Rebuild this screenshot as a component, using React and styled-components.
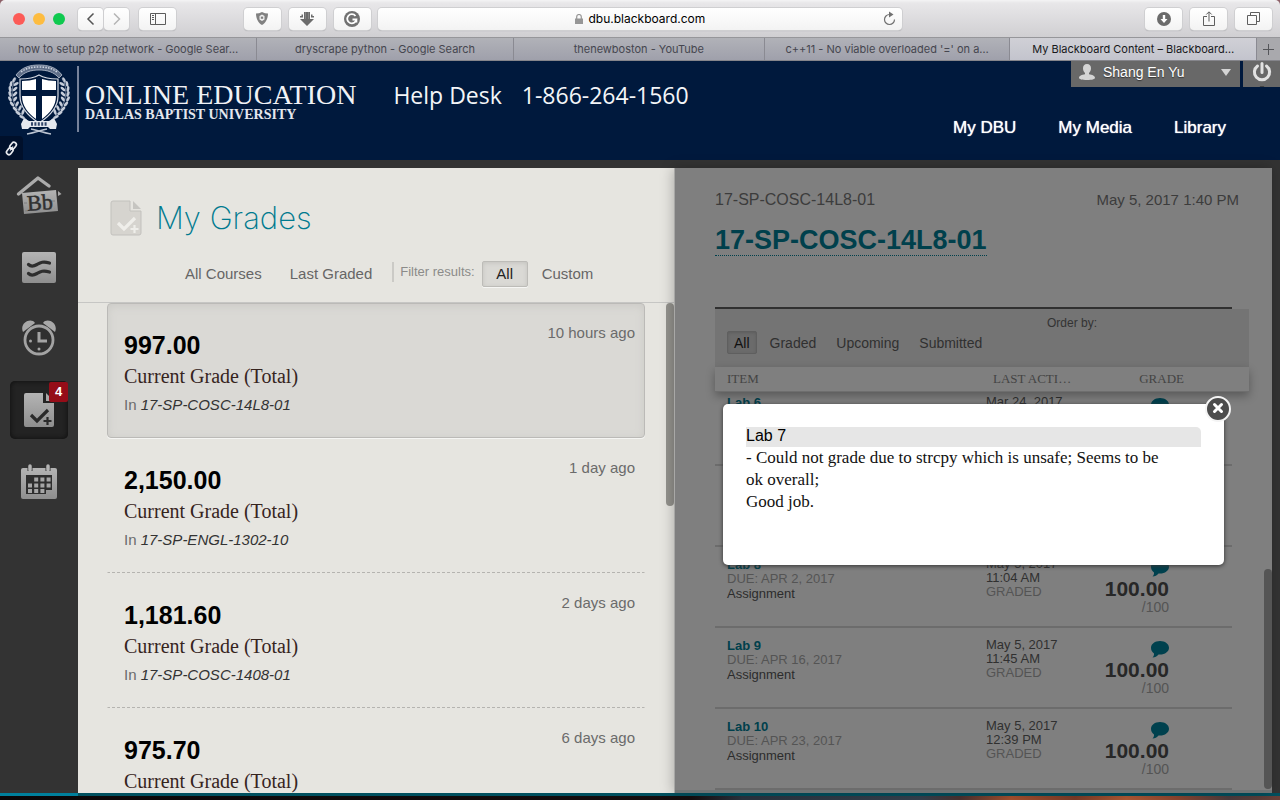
import React from "react";
import styled, { createGlobalStyle, css } from "styled-components";

const sans = '"Liberation Sans", Arial, sans-serif';
const serif = '"Liberation Serif", Georgia, serif';
const system = 'Inter, "Liberation Sans", sans-serif';

const GlobalStyle = createGlobalStyle`
  * { box-sizing: border-box; }
  body { margin: 0; background: #8d6068; font-family: ${sans}; overflow: hidden; }
  button { font: inherit; color: inherit; border: 0; padding: 0; background: none; cursor: pointer; }
  a { color: inherit; text-decoration: none; }
  h1, h2, h3, p, ul { margin: 0; padding: 0; font-weight: normal; }
  ul { list-style: none; }
  svg { display: block; flex: none; }
`;

const Window = styled.div`
  display: flex;
  flex-direction: column;
  height: 100vh;
  border-radius: 5px 5px 0 0;
  overflow: hidden;
`;

/* ---------- browser chrome ---------- */

const Toolbar = styled.div`
  display: grid;
  grid-template-columns: 1fr 41% 1fr;
  align-items: center;
  flex: none;
  height: 38px;
  background: linear-gradient(#f4f4f5, #e8e7e9 3px, #d0cfd2);
  border-bottom: 1px solid #96969a;
`;

const Cluster = styled.div`
  display: flex;
  align-items: center;
  gap: ${(p) => p.$gap || 8}px;
`;

const LeftTools = styled.div`
  display: flex;
  justify-content: space-between;
  padding: 0 7px 0 13px;
`;

const RightTools = styled(Cluster)`
  justify-content: flex-end;
  padding-right: 8px;
`;

const Light = styled.span`
  width: 12px;
  height: 12px;
  border-radius: 50%;
  background: ${(p) => p.$color};
`;

const ToolButton = styled.button`
  display: flex;
  align-items: center;
  justify-content: center;
  width: ${(p) => (p.$narrow ? 25 : 37)}px;
  height: 22px;
  border-radius: 4px;
  background: linear-gradient(#fff, #f3f3f3);
  box-shadow: 0 0 0 1px #cfcfd1, 0 1px 1px #9c9c9f;
`;

const Address = styled.label`
  display: flex;
  align-items: center;
  justify-content: center;
  gap: 5px;
  position: relative;
  height: 22px;
  padding-left: 6px;
  border-radius: 4px;
  background: linear-gradient(#fff, #f3f3f3);
  box-shadow: 0 0 0 1px #cfcfd1, 0 1px 1px #9c9c9f;
`;

const AddressInput = styled.input`
  width: 122px;
  padding: 0;
  border: 0;
  outline: 0;
  background: none;
  color: #000;
  font: 12px/20px ${system};
`;

const Reload = styled.button`
  position: absolute;
  right: 6px;
  top: 3px;
`;

const TabBar = styled.div`
  display: flex;
  flex: none;
  height: 23px;
  border-bottom: 1px solid #85858b;
  background: linear-gradient(#b1b2b8, #9fa0ab);
`;

const Tab = styled.button`
  flex: ${(p) => p.$grow} 1 0;
  min-width: 0;
  padding: 0 12px;
  overflow: hidden;
  white-space: nowrap;
  text-overflow: ellipsis;
  border-right: 1px solid #8a8a92;
  color: ${(p) => (p.$active ? "#17171a" : "#45464f")};
  background: ${(p) => (p.$active ? "linear-gradient(#d0d0d6, #c3c4cd)" : "none")};
  font: 11px/22px ${system};
`;

const NewTab = styled.button`
  display: flex;
  align-items: center;
  justify-content: center;
  width: 23px;
  background: #a9a9ad;
`;

/* ---------- university banner ---------- */

const Banner = styled.header`
  display: flex;
  justify-content: space-between;
  flex: none;
  position: relative;
  height: 99px;
  background: #00193d;
  color: #fff;
`;

const Brand = styled.div`
  display: flex;
  align-items: flex-start;
  padding-left: 7px;
`;

const BrandText = styled.div`
  margin: 5px 0 0 6px;
  padding: 13px 0 0 6px;
  height: 66px;
  border-left: 2px solid #76829a;
  font-family: ${serif};
  white-space: nowrap;
`;

const BrandName = styled.div`
  font-size: 28px;
  line-height: 32px;
  color: #f0f2f6;
`;

const BrandSub = styled.div`
  margin-top: -3px;
  font-size: 14px;
  font-weight: bold;
  line-height: 14px;
  color: #e4e7ee;
`;

const HelpLine = styled.div`
  display: flex;
  gap: 20px;
  margin: 18px 0 0 37px;
  font: 23px/32px "Open Sans", sans-serif;
  white-space: nowrap;
  color: #f3f5f8;
`;

const LinkBadge = styled.a`
  position: absolute;
  left: 0;
  bottom: 0;
  display: flex;
  align-items: center;
  justify-content: center;
  width: 23px;
  height: 24px;
  border-radius: 0 4px 0 0;
  background: #00102b;
`;

const BannerRight = styled.div`
  display: flex;
  flex-direction: column;
  align-items: flex-end;
`;

const UserBar = styled.div`
  display: flex;
  gap: 3px;
`;

const UserButton = styled.button`
  display: flex;
  align-items: center;
  width: 169px;
  height: 26px;
  padding: 0 9px 4px 8px;
  background: #686868;
  color: #fff;
  font-size: 14px;
  text-align: left;
  text-shadow: 0 1px 1px #333;
`;

const UserName = styled.span`
  flex: 1;
  padding-left: 8px;
`;

const PowerButton = styled.button`
  display: flex;
  justify-content: center;
  width: 37px;
  height: 26px;
  background: #686868;
`;

const MainNav = styled.nav`
  display: flex;
  gap: 42px;
  margin-top: 31px;
  padding-right: 54px;
  font-size: 17px;
  line-height: 20px;
  text-shadow: 0 0 1px #fff;
`;

/* ---------- page frame ---------- */

const Page = styled.main`
  display: flex;
  flex: 1;
  min-height: 0;
  background: #333;
`;

const Sidebar = styled.nav`
  display: flex;
  flex-direction: column;
  align-items: center;
  gap: 14px;
  flex: none;
  width: 78px;
  padding-top: 5px;
`;

const SideButton = styled.button`
  display: flex;
  align-items: center;
  justify-content: center;
  position: relative;
  flex: none;
  width: 58px;
  height: 58px;
  border-radius: 5px;
  ${(p) =>
    p.$active &&
    css`
      background: #232323;
      box-shadow: inset 0 0 5px #0c0c0c;
    `}
`;

const Badge = styled.span`
  position: absolute;
  top: 1px;
  right: 0;
  width: 19px;
  height: 20px;
  border-radius: 2px;
  background: #950d18;
  color: #fff;
  font: bold 13px/19px ${sans};
  text-align: center;
`;

const Panels = styled.div`
  display: grid;
  grid-template-columns: 1fr 1fr;
  flex: 1;
  min-width: 0;
  padding: 8px 8px 0 0;
`;

const GradesPanel = styled.section`
  display: flex;
  flex-direction: column;
  position: relative;
  min-height: 0;
  overflow: hidden;
  background: #e6e5e0;
`;

const GradesHeader = styled.div`
  flex: none;
  padding: 30px 0 14px;
  border-bottom: 1px solid #c6c6c4;
`;

const TitleRow = styled.div`
  display: flex;
  align-items: center;
  gap: 14px;
  padding-left: 32px;
`;

const Title = styled.h1`
  font: 200 31px/40px Inter, "Open Sans", sans-serif;
  color: #007a8f;
`;

const GradeFilters = styled.div`
  display: flex;
  align-items: center;
  height: 28px;
  margin-top: 22px;
  padding-left: 107px;
  color: #666;
  font-size: 15px;
`;

const FilterButton = styled.button`
  height: 26px;
  margin-right: ${(p) => p.$after || 0}px;
  padding-bottom: 2px;
  white-space: nowrap;
`;

const PressedFilter = styled(FilterButton)`
  width: 46px;
  border: 1px solid #bdbcb8;
  border-radius: 2px;
  background: #dad9d5;
  color: #222;
  box-shadow: inset 0 1px 4px #c4c3bf, 0 1px 0 #f6f6f4;
`;

const FilterLabel = styled.span`
  align-self: flex-start;
  height: 20px;
  margin: 2px 7px 0 0;
  padding-left: 6px;
  border-left: 2px solid #cbcac6;
  color: #8b8b89;
  font-size: 13px;
  line-height: 20px;
  white-space: nowrap;
`;

const GradeList = styled.ul`
  flex: 1;
  min-height: 0;
  overflow: hidden;
  padding: 0 30px 0 29px;
`;

const GradeItem = styled.li`
  display: flex;
  justify-content: space-between;
  padding: 27px 9px 22px 16px;
  border: 1px solid transparent;
  ${(p) =>
    p.$selected
      ? css`
          border-color: #bbbab7;
          border-radius: 4px;
          background: #dad9d5;
          box-shadow: inset 0 2px 8px #cbcac6, 0 1px 0 #f5f5f3;
        `
      : css`
          border-bottom: 1px dashed #b5b4b0;
        `}
`;

const Score = styled.div`
  font-size: 25px;
  font-weight: bold;
  line-height: 28px;
  color: #000;
`;

const ScoreLabel = styled.div`
  margin: 4px 0 6px;
  font: 20px/26px ${serif};
  color: #36241e;
`;

const ScoreCourse = styled.div`
  font-size: 15px;
  line-height: 20px;
  color: #6b6b6b;

  em { color: #333; }
`;

const Ago = styled.div`
  margin-top: -8px;
  font-size: 15px;
  line-height: 20px;
  color: #6b6b6b;
`;

const ListThumb = styled.div`
  position: absolute;
  top: 135px;
  right: 1px;
  width: 8px;
  height: 203px;
  border-radius: 4px;
  background: #93928d;
`;

/* ---------- dimmed detail panel ---------- */

const DetailPanel = styled.section`
  position: relative;
  z-index: 1;
  min-height: 0;
  padding: 22px 23px 0 40px;
  background: #7f7f7f;
  box-shadow: -1px 0 0 #a8a8a6, -2px 0 12px rgba(0, 0, 0, 0.25);
`;

const DetailScroll = styled.div`
  height: 100%;
  overflow: hidden;
  margin: 0 -23px 0 -20px;
  padding: 0 23px 0 20px;
`;

const CourseLine = styled.div`
  display: flex;
  justify-content: space-between;
  padding-right: 10px;
  color: #3c3c3c;
  line-height: 20px;
`;

const CourseCode = styled.span`
  font-size: 16px;
`;

const CourseDate = styled.time`
  font-size: 15px;
`;

const CourseLink = styled.a`
  display: inline-block;
  margin-top: 15px;
  border-bottom: 1px dotted #00404c;
  color: #00404c;
  font-size: 27px;
  font-weight: bold;
  line-height: 30px;
`;

const Rule = styled.div`
  height: 2px;
  margin: 51px 17px 0 0;
  background: #303030;
`;

const OrderBand = styled.div`
  display: grid;
  grid-template-columns: 1fr 202px;
  height: 58px;
  padding-left: 12px;
  background: #747474;
  color: #333;
`;

const OrderTabs = styled.div`
  display: flex;
  gap: 6px;
  padding-top: 22px;
`;

const OrderTab = styled.button`
  height: 23px;
  padding: 0 6px;
  border: 1px solid ${(p) => (p.$active ? "#5f5f5f" : "transparent")};
  border-radius: 2px;
  background: ${(p) => (p.$active ? "#6b6b6b" : "none")};
  box-shadow: ${(p) => (p.$active ? "inset 0 1px 3px #5e5e5e" : "none")};
  color: ${(p) => (p.$active ? "#111" : "#303030")};
  font-size: 14px;
`;

const OrderBy = styled.span`
  padding-top: 6px;
  font-size: 12px;
  line-height: 16px;
`;

const Labs = styled.table`
  width: 100%;
  table-layout: fixed;
  border-collapse: separate;
  border-spacing: 0;
  font-size: 13px;
`;

const LabsHead = styled.thead`
  position: relative;
  background: #7f7f7f;
  box-shadow: 0 4px 10px rgba(0, 0, 0, 0.3);
`;

const HeadCell = styled.th`
  width: ${(p) => p.$width || "auto"};
  height: 25px;
  padding: ${(p) => p.$pad || "0"};
  font: 13px/24px ${serif};
  text-align: ${(p) => p.$align || "left"};
  color: #444;
  border-bottom: 1px solid #6e6e6e;
`;

const LabCell = styled.td`
  height: ${(p) => (p.$clipped ? 74 : 81)}px;
  padding: ${(p) => (p.$clipped ? 3 : 10)}px ${(p) => (p.$right ? 63 : 0)}px 0 ${(p) => (p.$right ? 0 : 12)}px;
  border-bottom: 2px solid #6c6c6c;
  vertical-align: top;
  text-align: ${(p) => (p.$right ? "right" : "left")};
  line-height: 14px;
`;

const LabLink = styled.a`
  display: block;
  color: #00404c;
  font-weight: bold;
  line-height: 15px;
`;

const Muted = styled.div`
  color: #545454;
`;

const Kind = styled.div`
  color: #2c2c2c;
  line-height: 16px;
`;

const LabDate = styled.div`
  color: #303030;
  line-height: 14px;
`;

const Points = styled.div`
  margin-top: 1px;
  color: #272727;
  font-size: 21px;
  font-weight: bold;
  line-height: 22px;
`;

const OutOf = styled(Muted)`
  font-size: 14px;
  line-height: 15px;
`;

const CommentButton = styled.button`
  display: block;
  margin-left: auto;
  padding-top: 3px;
`;

const DetailThumb = styled.div`
  position: absolute;
  right: 0;
  bottom: 4px;
  width: 8px;
  height: 220px;
  border-radius: 4px;
  background: #555;
`;

const PanelFoot = styled.div`
  position: absolute;
  left: 0;
  right: 0;
  bottom: 0;
  height: 3px;
  background: #707475;
`;

const Dialog = styled.div`
  position: absolute;
  top: 236px;
  left: 48px;
  right: 48px;
  min-height: 161px;
  padding: 23px;
  border-radius: 5px;
  background: #fff;
  color: #111;
  box-shadow: 0 1px 4px #333;
`;

const DialogTitle = styled.h2`
  border-radius: 0 5px 0 0;
  background: #e6e6e6;
  font-size: 16px;
  line-height: 18px;
  padding-bottom: 2px;
  color: #000;
`;

const DialogText = styled.p`
  padding-right: 24px;
  font: 17px/22px ${serif};
`;

const DialogClose = styled.button`
  position: absolute;
  top: -9px;
  right: -8px;
`;

const TealEdge = styled.div`
  flex: none;
  height: 3px;
  background: linear-gradient(90deg, #007f9c 78px, #00505f 78px);
`;

const Desktop = styled.div`
  flex: none;
  height: 4px;
  background: linear-gradient(90deg, #0b0708 0%, #150d0e 54%, #2a3440 58%, #35414e 72%, #4a3230 75%, #a5512f 79%, #7a3c28 84%, #b05a34 88%, #8c4630 92%, #4b3c3e 96%, #6a4038 100%);
`;

/* ---------- drawings ---------- */

const Sprig = ({ flip }) => (
  <g transform={flip ? "translate(64 0) scale(-1 1)" : undefined} fill="#c5ccd8">
    {[
      [7, 19, -60], [4, 23, -80], [3, 28, 80], [3, 33, 70], [3, 38, 60],
      [5, 43, 50], [8, 48, 45], [11, 52, 35], [15, 56, 25],
      [9, 23, -30], [8, 28, -40], [8, 33, -45], [8, 38, -50], [10, 43, -60], [13, 47, -65], [16, 51, -70],
    ].map(([x, y, r]) => (
      <ellipse key={`${x}-${y}`} cx={x} cy={y} rx="3" ry="1.4" transform={`rotate(${r} ${x} ${y})`} />
    ))}
    <path d="M9 17C2 28 4 46 20 59" fill="none" stroke="#8d99ad" strokeWidth=".8" />
  </g>
);

const Crest = () => (
  <svg width="64" height="74" viewBox="0 0 64 74">
    <path d="M9 14C15 6 23 4 32 4s17 2 23 10l-3 3c-5-6-12-8-20-8s-15 2-20 8z" fill="#5f6e88" stroke="#b7c0ce" strokeWidth=".8" />
    <path d="M14 11c5-4 11-5 18-5s13 1 18 5" fill="none" stroke="#cdd4df" strokeWidth="1.6" strokeDasharray="1.6 1.2" />
    <Sprig />
    <Sprig flip />
    <path d="M13 18c7 0 14-1 19-4 5 3 12 4 19 4v17c0 12-8 20-19 27C21 55 13 47 13 35z" fill="#00193d" stroke="#d5dae3" strokeWidth="1.2" />
    <path d="M15 20c5 0 10-1 14-2v11H15zM35 18c4 1 9 2 14 2v9H35zM15 35h14v23c-8-6-14-13-14-23zM35 35h14c0 10-6 17-14 23z" fill="#fff" />
    <path d="M14 63l3-6 5 3h20l5-3 3 6-1 5h-6l-2-2H23l-2 2h-6z" fill="#e5e8ee" />
    <path d="M24 63h16" stroke="#33476b" strokeWidth="3.4" strokeDasharray="2 1.4" />
    <path d="M20 73c8-1 14-4 20-5M44 73c-8-1-14-4-20-5" fill="none" stroke="#bcc5d2" strokeWidth="1.6" />
  </svg>
);

const Chevron = ({ right }) => (
  <svg width="9" height="14" viewBox="0 0 9 14">
    <path d={right ? "M2 1.5l5.5 5.5-5.5 5.5" : "M7.5 1.5L2 7l5.5 5.5"} fill="none" stroke={right ? "#b5b5b5" : "#555"} strokeWidth="1.5" />
  </svg>
);

const SidebarGlyph = () => (
  <svg width="16" height="12" viewBox="0 0 16 12" fill="none" stroke="#5c5c5c">
    <path d="M.5.5h15v11H.5zM5.5.5v11M2 2.5h2M2 4.5h2M2 6.5h2" />
  </svg>
);

const ShieldGlyph = () => (
  <svg width="12" height="13" viewBox="0 0 12 13">
    <path d="M6 0c2 1 4 1.500 6 1.500C12 7 9.500 11 6 13 2.500 11 0 7 0 1.500 2 1.500 4 1 6 0z" fill="#808080" />
    <path d="M3.500 4L6 2.500 8.500 4v3.500L6 9 3.500 7.500z" fill="#f0f0f0" />
    <path d="M4.800 4.600h2.400v2.200H4.800z" fill="#808080" />
  </svg>
);

const ArrowGlyph = () => (
  <svg width="14" height="14" viewBox="0 0 14 14" fill="#6c6c6c">
    <path d="M4 0h6v7h4l-7 7-7-7h4zM1.500 2.500h1.500v3H0V4h1.500zM12.500 2.500H11v3h3V4h-1.500z" />
    <path d="M5.500 0v7M8.500 0v7" stroke="#999" strokeWidth=".6" />
  </svg>
);

const GGlyph = () => (
  <svg width="16" height="16" viewBox="0 0 16 16">
    <circle cx="8" cy="8" r="8" fill="#717171" />
    <path d="M11.500 5A4.600 4.600 0 1 0 12.400 8.500H8.500M12.400 8.500v3" fill="none" stroke="#fff" strokeWidth="1.8" />
  </svg>
);

const DownloadGlyph = () => (
  <svg width="14" height="14" viewBox="0 0 14 14">
    <circle cx="7" cy="7" r="7" fill="#6b6b6b" />
    <path d="M5.800 3h2.400v4h2.300L7 11 3.500 7h2.300z" fill="#fff" />
  </svg>
);

const ShareGlyph = () => (
  <svg width="12" height="16" viewBox="0 0 12 16" fill="none" stroke="#5e5e5e">
    <path d="M4 5.500H.5v9h11v-9H8M6 10.500V1M3.300 3.500L6 .8l2.700 2.700" />
  </svg>
);

const WindowsGlyph = () => (
  <svg width="13" height="13" viewBox="0 0 13 13" fill="none" stroke="#5e5e5e">
    <path d="M.5 3.500h9v9h-9zM3.500 3.500v-3h9v9h-3" />
  </svg>
);

const LockGlyph = () => (
  <svg width="8" height="10" viewBox="0 0 8 10">
    <path d="M0 4.500h8V10H0z" fill="#969696" />
    <path d="M1.700 5V2.800a2.300 2.300 0 0 1 4.600 0V5" fill="none" stroke="#969696" strokeWidth="1.2" />
  </svg>
);

const ReloadGlyph = () => (
  <svg width="13" height="15" viewBox="0 0 13 15">
    <path d="M6.500 3.500a5 5 0 1 0 5 5" fill="none" stroke="#707070" strokeWidth="1.2" />
    <path d="M6 .5l4.500 3L6 6.500z" fill="#707070" />
  </svg>
);

const PlusGlyph = () => (
  <svg width="11" height="11" viewBox="0 0 11 11">
    <path d="M5.500 0v11M0 5.500h11" stroke="#55565a" />
  </svg>
);

const ChainGlyph = () => (
  <svg width="15" height="15" viewBox="0 0 15 15" fill="none" stroke="#e8eaee" strokeWidth="1.7">
    <rect x="6.5" y="1" width="4.8" height="7.5" rx="2.4" transform="rotate(38 9 5)" />
    <rect x="3.5" y="6.5" width="4.8" height="7.5" rx="2.4" transform="rotate(38 6 10)" />
    <path d="M9 5.500l-3 4" strokeWidth="1.2" />
  </svg>
);

const PersonGlyph = () => (
  <svg width="16" height="16" viewBox="0 0 16 16">
    <path d="M8 0c2.600 0 4 1.800 4 4.300 0 2-.8 3.700-2 4.700v1.200c3.200.4 6 1.600 6 3.600 0 1.500-3 2.200-8 2.200s-8-.7-8-2.200c0-2 2.800-3.200 6-3.600V9C4.800 8 4 6.300 4 4.300 4 1.800 5.400 0 8 0z" fill="#d4d4d4" />
  </svg>
);

const PowerGlyph = () => (
  <svg width="20" height="26" viewBox="0 0 20 26" fill="none" stroke="#e2e2e2" strokeWidth="3" strokeLinecap="round">
    <path d="M5.500 5a7.600 7.600 0 1 0 9 0M10 2.500v9" />
    <path d="M8.500 26h3" stroke="#333" strokeWidth="1.5" />
  </svg>
);

const Metal = () => (
  <defs>
    <linearGradient id="metal" x1="0" y1="0" x2="0" y2="1">
      <stop offset="0" stopColor="#b4b4b4" />
      <stop offset="1" stopColor="#8e8e8e" />
    </linearGradient>
  </defs>
);

const HomeIcon = () => (
  <svg width="46" height="42" viewBox="0 0 46 42">
    <Metal />
    <path d="M2.500 21L22 5l11 8" fill="none" stroke="#ababab" strokeWidth="3.4" strokeLinecap="round" strokeLinejoin="round" />
    <path d="M42 18l3.500 3-3.500 2z" fill="#a8a8a8" />
    <path d="M6 20l34-3 2 21-34 3z" fill="url(#metal)" />
    <path d="M8 30h3M36 28h4M9 38l30-2.500" stroke="#777" strokeWidth=".8" strokeDasharray="3 3" />
    <text x="11" y="37" transform="rotate(-4 22 30)" fontFamily="Liberation Serif, serif" fontSize="22" stroke="#303030" strokeWidth=".5" fill="#303030">Bb</text>
  </svg>
);

const FeedIcon = () => (
  <svg width="34" height="34" viewBox="0 0 34 34">
    <rect y="3" width="34" height="31" rx="2" fill="url(#metal)" />
    <path d="M6.500 15.500c2 2 5 2 8.500 0s6-3.500 12.500-1.500M6.500 24.500c2 2 5 2 8.500 0s6-3.500 12.500-1.500" fill="none" stroke="#2e2e2e" strokeWidth="3.2" strokeLinecap="round" />
  </svg>
);

const ClockIcon = () => (
  <svg width="36" height="36" viewBox="0 0 36 36">
    <path d="M2 12C-2 3 10-3 14 3zM34 12c4-9-8-15-12-9z" fill="#a8a8a8" />
    <circle cx="18" cy="20" r="14" fill="#303030" stroke="#a3a3a3" strokeWidth="2.8" />
    <path d="M18 12v9h8" fill="none" stroke="#a3a3a3" strokeWidth="3" />
    <circle cx="9.5" cy="21" r="1.5" fill="#a3a3a3" />
    <circle cx="18" cy="29" r="1.5" fill="#a3a3a3" />
  </svg>
);

const GradesIcon = ({ pale }) => {
  const ink = pale ? "#efeeea" : "#2a2a2a";
  return (
    <svg width="32" height="36" viewBox="0 0 32 36">
      <path
        d="M3 1h17v10h11v22a2 2 0 0 1-2 2H3a2 2 0 0 1-2-2V3a2 2 0 0 1 2-2z"
        fill={pale ? "#d6d4cf" : "url(#metal)"}
        stroke={pale ? "#c2c1bd" : "none"}
      />
      <path d="M23 1l8 8h-8z" fill={pale ? "#c6c5c1" : "#a8a8a8"} />
      <path d="M8 23l6 6L25 18" fill="none" stroke={ink} strokeWidth="3.2" />
      <path d="M24.500 25v8M20.500 29h8" stroke={ink} strokeWidth="2.2" />
    </svg>
  );
};

const CalendarIcon = () => (
  <svg width="38" height="36" viewBox="0 0 38 36">
    <rect x="1" y="4" width="36" height="31" rx="2" fill="url(#metal)" />
    <path d="M10 0v7M28 0v7" stroke="#333" strokeWidth="5" />
    <path d="M10 2v4M28 2v4" stroke="#b4b4b4" strokeWidth="3.5" strokeLinecap="round" />
    <path d="M6 11h26v15h-6v4H6z" fill="#2e2e2e" />
    <path d="M14.200 15.500h17M8 21.500h23M8 27h17" stroke="#a6a6a6" strokeWidth="4" strokeDasharray="4 2.2" />
  </svg>
);

const SpeechGlyph = () => (
  <svg width="18" height="17" viewBox="0 0 18 17">
    <path d="M9 0c5 0 9 2.900 9 6.800s-4 6.800-9 6.800H7.500C6 15.500 4 16.500 1.500 16.500c1-1 1.700-2.300 1.500-4C1 11.200 0 9.200 0 6.800 0 2.900 4 0 9 0z" fill="#00414e" />
  </svg>
);

const CloseGlyph = () => (
  <svg width="28" height="28" viewBox="0 0 28 28">
    <circle cx="14" cy="14" r="12" fill="#4c4c4c" stroke="#f4f4f4" strokeWidth="2" />
    <path d="M10.500 9.500l7 7M17.500 9.500l-7 7" stroke="#fff" strokeWidth="3" strokeLinecap="round" />
  </svg>
);

/* ---------- data ---------- */

const tabs = [
  ["how to setup p2p network - Google Sear…", 258],
  ["dryscrape python - Google Search", 257],
  ["thenewboston - YouTube", 251],
  ["c++11 - No viable overloaded '=' on a…", 245],
  ["My Blackboard Content – Blackboard…", 246],
];

const grades = [
  { score: "997.00", course: "17-SP-COSC-14L8-01", ago: "10 hours ago" },
  { score: "2,150.00", course: "17-SP-ENGL-1302-10", ago: "1 day ago" },
  { score: "1,181.60", course: "17-SP-COSC-1408-01", ago: "2 days ago" },
  { score: "975.70", ago: "6 days ago" },
];

const labs = [
  { id: 6, name: "Lab 6", date: "Mar 24, 2017", comment: true },
  { id: 7 },
  { id: 8, name: "Lab 8", due: "APR 2, 2017", date: "May 5, 2017", time: "11:04 AM", points: "100.00", comment: true },
  { id: 9, name: "Lab 9", due: "APR 16, 2017", date: "May 5, 2017", time: "11:45 AM", points: "100.00", comment: true },
  { id: 10, name: "Lab 10", due: "APR 23, 2017", date: "May 5, 2017", time: "12:39 PM", points: "100.00", comment: true },
];

const LabRow = ({ lab, clipped }) => (
  <tr>
    <LabCell $clipped={clipped}>
      {lab.name && <LabLink href={`#lab-${lab.id}`}>{lab.name}</LabLink>}
      {lab.due && (
        <>
          <Muted>DUE: {lab.due}</Muted>
          <Kind>Assignment</Kind>
        </>
      )}
    </LabCell>
    <LabCell $clipped={clipped}>
      {lab.date && <LabDate>{lab.date}</LabDate>}
      {lab.time && (
        <>
          <LabDate>{lab.time}</LabDate>
          <Muted>GRADED</Muted>
        </>
      )}
    </LabCell>
    <LabCell $clipped={clipped} $right>
      {lab.comment && (
        <CommentButton aria-label="Show comment">
          <SpeechGlyph />
        </CommentButton>
      )}
      {lab.points && (
        <>
          <Points>{lab.points}</Points>
          <OutOf>/100</OutOf>
        </>
      )}
    </LabCell>
  </tr>
);

export default function App() {
  return (
    <Window>
      <GlobalStyle />
      <Toolbar>
        <LeftTools>
          <Cluster $gap={13}>
            <Cluster>
              <Light $color="#fc5b57" />
              <Light $color="#fdbc40" />
              <Light $color="#0fc94f" />
            </Cluster>
            <Cluster $gap={10}>
              <Cluster $gap={1}>
                <ToolButton $narrow aria-label="Back"><Chevron /></ToolButton>
                <ToolButton $narrow aria-label="Forward"><Chevron right /></ToolButton>
              </Cluster>
              <ToolButton aria-label="Show sidebar"><SidebarGlyph /></ToolButton>
            </Cluster>
          </Cluster>
          <Cluster>
            <ToolButton aria-label="Privacy"><ShieldGlyph /></ToolButton>
            <ToolButton aria-label="Save video"><ArrowGlyph /></ToolButton>
            <ToolButton aria-label="Grammar check"><GGlyph /></ToolButton>
          </Cluster>
        </LeftTools>
        <Address>
          <LockGlyph />
          <AddressInput aria-label="Address" defaultValue="dbu.blackboard.com" />
          <Reload aria-label="Reload"><ReloadGlyph /></Reload>
        </Address>
        <RightTools>
          <ToolButton aria-label="Downloads"><DownloadGlyph /></ToolButton>
          <ToolButton aria-label="Share"><ShareGlyph /></ToolButton>
          <ToolButton aria-label="Show all tabs"><WindowsGlyph /></ToolButton>
        </RightTools>
      </Toolbar>
      <TabBar>
        {tabs.map(([label, grow], i) => (
          <Tab key={label} $grow={grow} $active={i === 4}>{label}</Tab>
        ))}
        <NewTab aria-label="New tab"><PlusGlyph /></NewTab>
      </TabBar>

      <Banner>
        <Brand>
          <Crest />
          <BrandText>
            <BrandName>ONLINE EDUCATION</BrandName>
            <BrandSub>DALLAS BAPTIST UNIVERSITY</BrandSub>
          </BrandText>
          <HelpLine>
            <span>Help Desk</span>
            <span>1-866-264-1560</span>
          </HelpLine>
        </Brand>
        <LinkBadge href="#link" aria-label="Quick links"><ChainGlyph /></LinkBadge>
        <BannerRight>
          <UserBar>
            <UserButton>
              <PersonGlyph />
              <UserName>Shang En Yu</UserName>
              <svg width="10" height="7" viewBox="0 0 10 7"><path d="M0 0h10L5 7z" fill="#d4d4d4" /></svg>
            </UserButton>
            <PowerButton aria-label="Log out"><PowerGlyph /></PowerButton>
          </UserBar>
          <MainNav>
            <a href="#dbu">My DBU</a>
            <a href="#media">My Media</a>
            <a href="#library">Library</a>
          </MainNav>
        </BannerRight>
      </Banner>

      <Page>
        <Sidebar>
          <SideButton aria-label="Blackboard home"><HomeIcon /></SideButton>
          <SideButton aria-label="Posts"><FeedIcon /></SideButton>
          <SideButton aria-label="Updates"><ClockIcon /></SideButton>
          <SideButton aria-label="My Grades" $active><GradesIcon /><Badge>4</Badge></SideButton>
          <SideButton aria-label="Calendar"><CalendarIcon /></SideButton>
        </Sidebar>
        <Panels>
          <GradesPanel>
            <GradesHeader>
              <TitleRow>
                <GradesIcon pale />
                <Title>My Grades</Title>
              </TitleRow>
              <GradeFilters>
                <FilterButton $after={28}>All Courses</FilterButton>
                <FilterButton $after={20}>Last Graded</FilterButton>
                <FilterLabel>Filter results:</FilterLabel>
                <PressedFilter $after={14}>All</PressedFilter>
                <FilterButton>Custom</FilterButton>
              </GradeFilters>
            </GradesHeader>
            <GradeList>
              {grades.map(({ score, course, ago }, i) => (
                <GradeItem key={score} $selected={i === 0}>
                  <div>
                    <Score>{score}</Score>
                    <ScoreLabel>Current Grade (Total)</ScoreLabel>
                    {course && <ScoreCourse>In <em>{course}</em></ScoreCourse>}
                  </div>
                  <Ago>{ago}</Ago>
                </GradeItem>
              ))}
            </GradeList>
            <ListThumb />
          </GradesPanel>

          <DetailPanel>
            <DetailScroll>
              <CourseLine>
                <CourseCode>17-SP-COSC-14L8-01</CourseCode>
                <CourseDate>May 5, 2017 1:40 PM</CourseDate>
              </CourseLine>
              <CourseLink href="#course">17-SP-COSC-14L8-01</CourseLink>
              <Rule />
              <OrderBand>
                <OrderTabs>
                  <OrderTab $active>All</OrderTab>
                  <OrderTab>Graded</OrderTab>
                  <OrderTab>Upcoming</OrderTab>
                  <OrderTab>Submitted</OrderTab>
                </OrderTabs>
                <OrderBy>Order by:</OrderBy>
              </OrderBand>
              <Labs>
                <LabsHead>
                  <tr>
                    <HeadCell $pad="0 0 0 12px">ITEM</HeadCell>
                    <HeadCell $pad="0 0 0 19px" $width="110px">LAST ACTI…</HeadCell>
                    <HeadCell $pad="0 48px 0 0" $width="148px" $align="right">GRADE</HeadCell>
                    <HeadCell $width="17px" />
                  </tr>
                </LabsHead>
                <tbody>
                  {labs.map((lab, i) => (
                    <LabRow key={lab.id} lab={lab} clipped={i === 0} />
                  ))}
                </tbody>
              </Labs>
            </DetailScroll>
            <PanelFoot />
            <DetailThumb />
            <Dialog role="dialog" aria-label="Lab 7">
              <DialogTitle>Lab 7</DialogTitle>
              <DialogText>
                - Could not grade due to strcpy which is unsafe; Seems to be ok overall;
                <br />
                Good job.
              </DialogText>
              <DialogClose aria-label="Close"><CloseGlyph /></DialogClose>
            </Dialog>
          </DetailPanel>
        </Panels>
      </Page>
      <TealEdge />
      <Desktop />
    </Window>
  );
}
